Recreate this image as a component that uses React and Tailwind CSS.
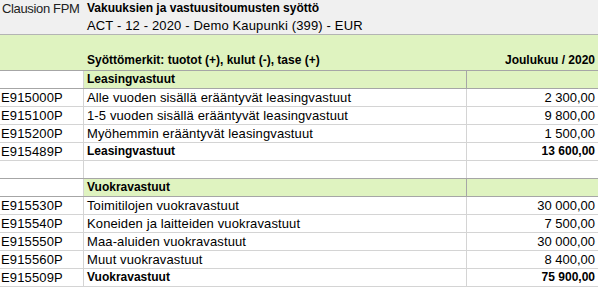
const leasing = [
  { code: "E915000P", label: "Alle vuoden sisällä erääntyvät leasingvastuut", value: "2 300,00" },
  { code: "E915100P", label: "1-5 vuoden sisällä erääntyvät leasingvastuut", value: "9 800,00" },
  { code: "E915200P", label: "Myöhemmin erääntyvät leasingvastuut", value: "1 500,00" },
];

const rents = [
  { code: "E915530P", label: "Toimitilojen vuokravastuut", value: "30 000,00" },
  { code: "E915540P", label: "Koneiden ja laitteiden vuokravastuut", value: "7 500,00" },
  { code: "E915550P", label: "Maa-aluiden vuokravastuut", value: "30 000,00" },
  { code: "E915560P", label: "Muut vuokravastuut", value: "8 400,00" },
];

const Row = ({ code, label, value, bold }) => (
  <div className="flex h-[18px] border-b border-[#d4d4d4]">
    <div className="w-[84px] shrink-0 border-r border-[#d4d4d4] pl-[1px] leading-[17px] tracking-[0.15px]">{code}</div>
    <div
      className={`w-[383px] shrink-0 border-r border-[#d4d4d4] pl-[3px] leading-[17px] ${
        bold ? "font-bold text-[12px]" : "tracking-[0.12px]"
      }`}
    >
      {label}
    </div>
    <div className={`flex-1 pr-[3px] text-right leading-[17px] ${bold ? "font-bold text-[12px]" : ""}`}>{value}</div>
  </div>
);

const SectionRow = ({ title, topDark }) => (
  <div className={`flex border-b border-[#a6a6a6] ${topDark ? "-mt-px h-[19px] border-t border-t-[#a6a6a6]" : "h-[18px]"}`}>
    <div className="w-[84px] shrink-0 border-r border-[#d4d4d4] bg-white"></div>
    <div className="w-[383px] shrink-0 border-r border-[#a6a6a6] bg-[#dff3c0] pl-[3px] text-[12px] font-bold leading-[17px]">
      {title}
    </div>
    <div className="flex-1 bg-[#dff3c0]"></div>
  </div>
);

export default function App() {
  return (
    <div
      className="w-[598px] h-[287px] overflow-hidden bg-white text-[13px] text-black"
      style={{ fontFamily: '"Liberation Sans", Arial, sans-serif' }}
    >
      {/* header */}
      <div className="h-[35px] bg-[#f0f0f0] border-b border-[#b4b4b4]">
        <div className="flex h-[17px] leading-[17px]">
          <div className="w-[84px] pl-[2px] tracking-[-0.35px] text-[#222] whitespace-nowrap">Clausion FPM</div>
          <div className="pl-[3px] text-[12px] font-bold">Vakuuksien ja vastuusitoumusten syöttö</div>
        </div>
        <div className="flex h-[17px] leading-[17px]">
          <div className="w-[84px]"></div>
          <div className="pl-[3px] tracking-[0.15px]">ACT - 12 - 2020 - Demo Kaupunki (399) - EUR</div>
        </div>
      </div>

      {/* green band */}
      <div className="flex h-[36px] items-end bg-[#dff3c0] border-b border-[#a6a6a6] text-[12px] font-bold">
        <div className="w-[84px] shrink-0"></div>
        <div className="w-[383px] shrink-0 pl-[3px] leading-[17px] pb-px">Syöttömerkit: tuotot (+), kulut (-), tase (+)</div>
        <div className="flex-1 pr-[3px] text-right leading-[17px] pb-px">Joulukuu / 2020</div>
      </div>

      <SectionRow title="Leasingvastuut" />
      {leasing.map((r) => (
        <Row key={r.code} {...r} />
      ))}
      <Row code="E915489P" label="Leasingvastuut" value="13 600,00" bold />
      <Row code="" label="" value="" />

      <SectionRow title="Vuokravastuut" topDark />
      {rents.map((r) => (
        <Row key={r.code} {...r} />
      ))}
      <Row code="E915509P" label="Vuokravastuut" value="75 900,00" bold />
    </div>
  );
}
